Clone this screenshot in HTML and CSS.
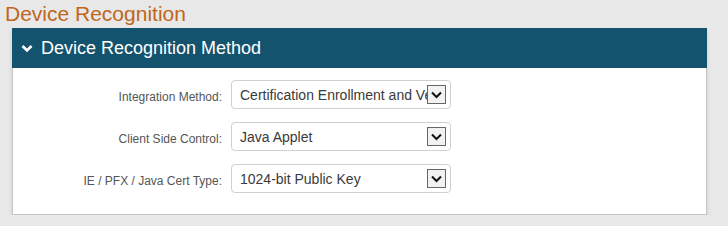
FILE: index.html
```html
<!DOCTYPE html>
<html lang="en">
<head>
    <meta charset="UTF-8">
    <title>Device Recognition</title>
    <link rel="stylesheet" href="styles.css">
</head>
<body>
    <h1 class="page-title">Device Recognition</h1>

    <div class="panel">
        <div class="panel-header">
            <svg class="chevron" width="12" height="9" viewBox="0 0 12 9">
                <path d="M1.5 2 L6 6.5 L10.5 2" fill="none" stroke="#fff" stroke-width="2.6"/>
            </svg>
            <span>Device Recognition Method</span>
        </div>
        <div class="panel-body">
            <div class="form-row">
                <label class="form-label">Integration Method:</label>
                <div class="select">
                    <span class="select-text">Certification Enrollment and Verification</span>
                    <span class="select-arrow">
                        <svg width="11" height="8" viewBox="0 0 11 8"><path d="M1 1.5 L5.5 6 L10 1.5" fill="none" stroke="#111" stroke-width="2"/></svg>
                    </span>
                </div>
            </div>
            <div class="form-row">
                <label class="form-label">Client Side Control:</label>
                <div class="select">
                    <span class="select-text">Java Applet</span>
                    <span class="select-arrow">
                        <svg width="11" height="8" viewBox="0 0 11 8"><path d="M1 1.5 L5.5 6 L10 1.5" fill="none" stroke="#111" stroke-width="2"/></svg>
                    </span>
                </div>
            </div>
            <div class="form-row">
                <label class="form-label">IE / PFX / Java Cert Type:</label>
                <div class="select">
                    <span class="select-text">1024-bit Public Key</span>
                    <span class="select-arrow">
                        <svg width="11" height="8" viewBox="0 0 11 8"><path d="M1 1.5 L5.5 6 L10 1.5" fill="none" stroke="#111" stroke-width="2"/></svg>
                    </span>
                </div>
            </div>
        </div>
    </div>
</body>
</html>
```

FILE: styles.css
```css
body {
    margin: 0;
    padding: 0 21px 0 12px;
    background-color: #e8e8e8;
    font-family: "Liberation Sans", Arial, sans-serif;
}
.page-title {
    margin: 0 0 0 -7px;
    height: 28px;
    line-height: 27px;
    font-size: 21px;
    font-weight: normal;
    color: #c0661c;
}
.panel {
    background-color: white;
    border: 1px solid #c6c6c6;
    border-top: none;
    box-shadow: 0 3px 4px rgba(0,0,0,0.12);
}
.panel-header {
    display: flex;
    align-items: center;
    height: 40px;
    margin: 0 -1px;
    padding-left: 9px;
    background-color: #14536e;
    color: white;
    font-size: 18px;
}
.chevron {
    margin-right: 8px;
    margin-top: 1px;
}
.panel-body {
    display: flex;
    flex-direction: column;
    gap: 13px;
    padding: 12px 0 21px;
}
.form-row {
    display: flex;
    align-items: center;
}
.form-label {
    width: 209px;
    margin-right: 9px;
    padding-top: 5px;
    text-align: right;
    font-size: 12px;
    color: #555;
}
.select {
    display: flex;
    align-items: center;
    box-sizing: border-box;
    width: 220px;
    height: 29px;
    padding: 0 4px 0 8px;
    border: 1px solid #d0d0d0;
    border-radius: 4px;
    background-color: white;
}
.select-text {
    flex: 1;
    overflow: hidden;
    white-space: nowrap;
    font-size: 14px;
    color: #3a3a3a;
}
.select-arrow {
    display: flex;
    align-items: center;
    justify-content: center;
    box-sizing: border-box;
    width: 19px;
    height: 19px;
    border: 1px solid #666;
    background-color: #f2f2f2;
}
```
